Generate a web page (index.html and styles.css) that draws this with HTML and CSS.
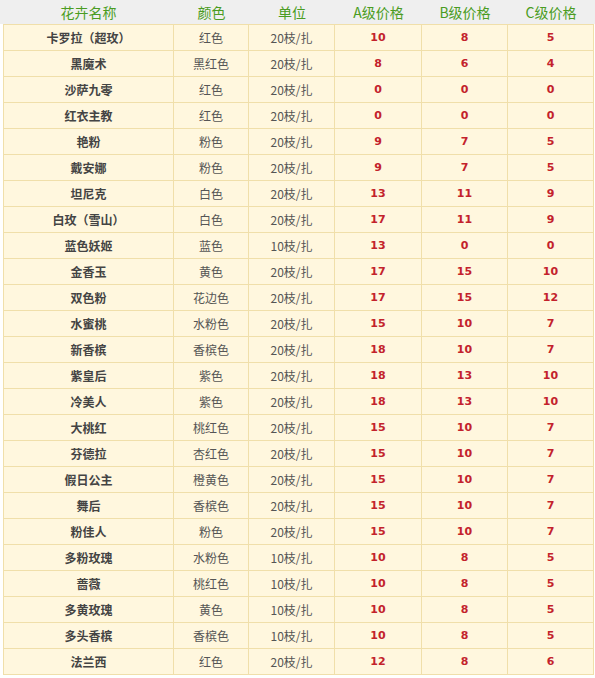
FILE: index.html
```html
<!DOCTYPE html>
<html lang="zh">
<head>
<meta charset="utf-8">
<title>花卉价格</title>
<link rel="stylesheet" href="styles.css">
</head>
<body>
<div class="head">
  <div class="h c1">花卉名称</div>
  <div class="h c2">颜色</div>
  <div class="h c3">单位</div>
  <div class="h c4">A级价格</div>
  <div class="h c5">B级价格</div>
  <div class="h c6">C级价格</div>
</div>
<table class="grid">
  <colgroup>
    <col class="w1"><col class="w2"><col class="w3"><col class="w4"><col class="w5"><col class="w6">
  </colgroup>
  <tbody>
    <tr><td class="name">卡罗拉（超玫）</td><td>红色</td><td>20枝/扎</td><td class="p">10</td><td class="p">8</td><td class="p">5</td></tr>
    <tr><td class="name">黑魔术</td><td>黑红色</td><td>20枝/扎</td><td class="p">8</td><td class="p">6</td><td class="p">4</td></tr>
    <tr><td class="name">沙萨九零</td><td>红色</td><td>20枝/扎</td><td class="p">0</td><td class="p">0</td><td class="p">0</td></tr>
    <tr><td class="name">红衣主教</td><td>红色</td><td>20枝/扎</td><td class="p">0</td><td class="p">0</td><td class="p">0</td></tr>
    <tr><td class="name">艳粉</td><td>粉色</td><td>20枝/扎</td><td class="p">9</td><td class="p">7</td><td class="p">5</td></tr>
    <tr><td class="name">戴安娜</td><td>粉色</td><td>20枝/扎</td><td class="p">9</td><td class="p">7</td><td class="p">5</td></tr>
    <tr><td class="name">坦尼克</td><td>白色</td><td>20枝/扎</td><td class="p">13</td><td class="p">11</td><td class="p">9</td></tr>
    <tr><td class="name">白玫（雪山）</td><td>白色</td><td>20枝/扎</td><td class="p">17</td><td class="p">11</td><td class="p">9</td></tr>
    <tr><td class="name">蓝色妖姬</td><td>蓝色</td><td>10枝/扎</td><td class="p">13</td><td class="p">0</td><td class="p">0</td></tr>
    <tr><td class="name">金香玉</td><td>黄色</td><td>20枝/扎</td><td class="p">17</td><td class="p">15</td><td class="p">10</td></tr>
    <tr><td class="name">双色粉</td><td>花边色</td><td>20枝/扎</td><td class="p">17</td><td class="p">15</td><td class="p">12</td></tr>
    <tr><td class="name">水蜜桃</td><td>水粉色</td><td>20枝/扎</td><td class="p">15</td><td class="p">10</td><td class="p">7</td></tr>
    <tr><td class="name">新香槟</td><td>香槟色</td><td>20枝/扎</td><td class="p">18</td><td class="p">10</td><td class="p">7</td></tr>
    <tr><td class="name">紫皇后</td><td>紫色</td><td>20枝/扎</td><td class="p">18</td><td class="p">13</td><td class="p">10</td></tr>
    <tr><td class="name">冷美人</td><td>紫色</td><td>20枝/扎</td><td class="p">18</td><td class="p">13</td><td class="p">10</td></tr>
    <tr><td class="name">大桃红</td><td>桃红色</td><td>20枝/扎</td><td class="p">15</td><td class="p">10</td><td class="p">7</td></tr>
    <tr><td class="name">芬德拉</td><td>杏红色</td><td>20枝/扎</td><td class="p">15</td><td class="p">10</td><td class="p">7</td></tr>
    <tr><td class="name">假日公主</td><td>橙黄色</td><td>20枝/扎</td><td class="p">15</td><td class="p">10</td><td class="p">7</td></tr>
    <tr><td class="name">舞后</td><td>香槟色</td><td>20枝/扎</td><td class="p">15</td><td class="p">10</td><td class="p">7</td></tr>
    <tr><td class="name">粉佳人</td><td>粉色</td><td>20枝/扎</td><td class="p">15</td><td class="p">10</td><td class="p">7</td></tr>
    <tr><td class="name">多粉玫瑰</td><td>水粉色</td><td>10枝/扎</td><td class="p">10</td><td class="p">8</td><td class="p">5</td></tr>
    <tr><td class="name">蔷薇</td><td>桃红色</td><td>10枝/扎</td><td class="p">10</td><td class="p">8</td><td class="p">5</td></tr>
    <tr><td class="name">多黄玫瑰</td><td>黄色</td><td>10枝/扎</td><td class="p">10</td><td class="p">8</td><td class="p">5</td></tr>
    <tr><td class="name">多头香槟</td><td>香槟色</td><td>10枝/扎</td><td class="p">10</td><td class="p">8</td><td class="p">5</td></tr>
    <tr><td class="name">法兰西</td><td>红色</td><td>20枝/扎</td><td class="p">12</td><td class="p">8</td><td class="p">6</td></tr>
  </tbody>
</table>
</body>
</html>
```

FILE: styles.css
```css
html, body {
  margin: 0;
  padding: 0;
  background: #ffffff;
}
body {
  font-family: "Noto Sans CJK SC", "DejaVu Sans", sans-serif;
  font-size: 12px;
  line-height: 14px;
  color: #555555;
}
.head {
  display: flex;
  height: 24px;
  background: #efefef;
  padding-left: 3px;
}
.h {
  flex: none;
  text-align: center;
  line-height: 24px;
  font-size: 14px;
  color: #4a9c22;
}
.c1 { width: 171px; }
.c2 { width: 75px; }
.c3 { width: 86px; }
.c4 { width: 87px; }
.c5 { width: 86px; }
.c6 { width: 86px; }

.grid {
  margin-left: 3px;
  border-collapse: collapse;
  table-layout: fixed;
  width: 590px;
  background: #fff7de;
}
.w1 { width: 170px; }
.w2 { width: 75px; }
.w3 { width: 86px; }
.w4 { width: 87px; }
.w5 { width: 86px; }
.w6 { width: 86px; }
.grid tr {
  height: 26px;
}
.grid td {
  border: 1px solid #f0dfaa;
  padding: 0;
  line-height: 14px;
  text-align: center;
  vertical-align: middle;
  white-space: nowrap;
  color: #555555;
}
.grid td.name {
  font-weight: bold;
  color: #444444;
}
.grid td.p {
  font-family: "DejaVu Sans", Verdana, sans-serif;
  font-weight: bold;
  font-size: 11px;
  color: #c3222c;
}
```
